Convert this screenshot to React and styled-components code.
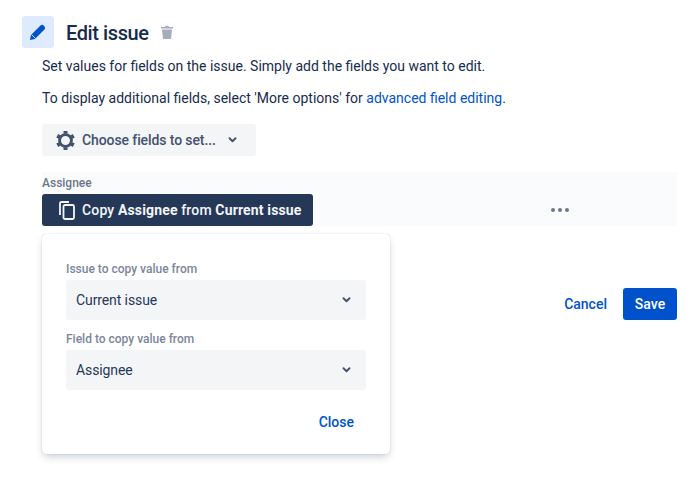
import React from "react";
import styled, { createGlobalStyle } from "styled-components";

const FONT = `Roboto, "Noto Sans", sans-serif`;

const GlobalStyle = createGlobalStyle`
  html, body {
    margin: 0;
    background: #fff;
  }
  body {
    font-family: ${FONT};
    font-size: 14px;
    color: #172b4d;
  }
`;

const Page = styled.div`
  width: 690px;
  height: 489px;
  padding: 16px 13px 0 22px;
  box-sizing: border-box;
  overflow: hidden;
`;

const Header = styled.div`
  display: flex;
  align-items: center;
  height: 32px;
`;

const IconTile = styled.div`
  width: 32px;
  height: 32px;
  border-radius: 3px;
  background: #deebff;
  display: flex;
  align-items: center;
  justify-content: center;
  margin-right: 12px;
`;

const Title = styled.h1`
  margin: 2px 12px 0 0;
  font-size: 20px;
  line-height: 32px;
  font-weight: 500;
  letter-spacing: -0.4px;
  color: #172b4d;
`;

const Body = styled.div`
  padding-left: 20px;
`;

const Paragraph = styled.p`
  margin: ${(p) => p.$top}px 0 0;
  line-height: 20px;
  font-size: 14px;
`;

const Link = styled.a`
  color: #0052cc;
`;

const FieldsButton = styled.button`
  display: flex;
  align-items: center;
  width: 214px;
  height: 32px;
  margin-top: 16px;
  padding: 0 15px 0 14px;
  box-sizing: border-box;
  border: 0;
  border-radius: 3px;
  background: #f4f5f7;
  color: #42526e;
  font: 500 14px ${FONT};
`;

const FieldsLabel = styled.span`
  margin: 0 12px 0 7px;
  letter-spacing: -0.1px;
  white-space: nowrap;
`;

const FieldRow = styled.div`
  position: relative;
  height: 54px;
  margin-top: 16px;
  background: #fafbfc;
`;

const FieldLabel = styled.div`
  font-size: 12px;
  line-height: 22px;
  font-weight: 500;
  color: #6b778c;
`;

const CopyButton = styled.button`
  display: flex;
  align-items: center;
  width: 271px;
  height: 32px;
  padding: 0 0 0 17px;
  box-sizing: border-box;
  border: 0;
  border-radius: 3px;
  background: #253858;
  color: #f4f5f7;
  font: 500 14px ${FONT};
  white-space: nowrap;
  b {
    font-weight: 700;
  }
`;

const CopyText = styled.span`
  margin-left: 7px;
  letter-spacing: 0.15px;
`;

const Dots = styled.div`
  position: absolute;
  left: 509px;
  top: 36px;
  display: flex;
  gap: 3px;
  span {
    width: 4px;
    height: 4px;
    border-radius: 50%;
    background: #6b778c;
  }
`;

const Popover = styled.div`
  position: absolute;
  left: 0;
  top: 62px;
  z-index: 2;
  width: 348px;
  height: 220px;
  padding: 24px;
  box-sizing: border-box;
  background: #fff;
  border-radius: 4px;
  box-shadow: 0 4px 8px -2px rgba(9, 30, 66, 0.25), 0 0 1px rgba(9, 30, 66, 0.31);
`;

const PopLabel = styled.div`
  font-size: 12px;
  line-height: 22px;
  font-weight: 500;
  color: #7a869a;
`;

const Select = styled.div`
  display: flex;
  align-items: center;
  justify-content: space-between;
  height: 40px;
  padding: 0 15px 0 10px;
  margin-bottom: 8px;
  background: #f4f5f7;
  border-radius: 3px;
  letter-spacing: -0.1px;
  color: #253858;
`;

const PopFooter = styled.div`
  display: flex;
  justify-content: flex-end;
  margin-top: 20px;
  padding-right: 12px;
`;

const TextButton = styled.a`
  color: #0052cc;
  font-weight: 500;
  line-height: 24px;
`;

const Footer = styled.div`
  display: flex;
  justify-content: flex-end;
  align-items: center;
  gap: 16px;
  margin-top: 62px;
`;

const SaveButton = styled.button`
  width: 54px;
  height: 32px;
  border: 0;
  border-radius: 3px;
  background: #0052cc;
  color: #fff;
  font: 500 14px ${FONT};
`;

const Pencil = () => (
  <svg width="18" height="18" viewBox="0 0 20 20" fill="#0052cc">
    <path d="M1 19l1.200-5.600L12.800 2.800a2.400 2.400 0 0 1 3.400 0l1 1a2.400 2.400 0 0 1 0 3.400L6.600 17.800z" />
    <path d="M2.800 12.800l4.400 4.400" stroke="#deebff" strokeWidth="1" />
  </svg>
);

const Trash = () => (
  <svg width="12" height="14" viewBox="0 0 12 14" fill="#a5adba">
    <path d="M0 2h4l.6-1.200h2.800L8 2h4v1.600H0zM1 4.400h10L10 14H2z" />
  </svg>
);

const Gear = () => (
  <svg width="19" height="19" viewBox="0 0 24 24" fill="none" stroke="#42526e" strokeWidth="3.600">
    <circle cx="12" cy="12" r="7.500" />
    <path strokeWidth="5" d="M12 0v3.500M12 20.500v3.500M1.600 6l3 1.750M19.400 16.250l3 1.750M1.600 18l3-1.750M19.400 7.750l3-1.750" />
  </svg>
);

const Chevron = () => (
  <svg width="9" height="6" viewBox="0 0 10 7" fill="none" stroke="#42526e" strokeWidth="2.200" strokeLinecap="round" strokeLinejoin="round">
    <path d="M1.500 1.500L5 5l3.500-3.500" />
  </svg>
);

const CopyIcon = () => (
  <svg width="16" height="19" viewBox="0 0 16 19" fill="none" stroke="#f4f5f7" strokeWidth="1.800">
    <path d="M1 14V2.500C1 1.600 1.600 1 2.500 1H10" />
    <rect x="4.500" y="4" width="10.500" height="14" rx="1.500" />
  </svg>
);

const App = () => {
  return (
    <Page>
      <GlobalStyle />
      <Header>
        <IconTile>
          <Pencil />
        </IconTile>
        <Title>Edit issue</Title>
        <Trash />
      </Header>
      <Body>
        <Paragraph $top={8}>
          Set values for fields on the issue. Simply add the fields you want to edit.
        </Paragraph>
        <Paragraph $top={12}>
          To display additional fields, select 'More options' for <Link>advanced field editing</Link>.
        </Paragraph>
        <FieldsButton>
          <Gear />
          <FieldsLabel>Choose fields to set...</FieldsLabel>
          <Chevron />
        </FieldsButton>
        <FieldRow>
          <FieldLabel>Assignee</FieldLabel>
          <CopyButton>
            <CopyIcon />
            <CopyText>
              Copy <b>Assignee</b> from <b>Current issue</b>
            </CopyText>
          </CopyButton>
          <Dots>
            <span />
            <span />
            <span />
          </Dots>
          <Popover>
            <PopLabel>Issue to copy value from</PopLabel>
            <Select>
              Current issue
              <Chevron />
            </Select>
            <PopLabel>Field to copy value from</PopLabel>
            <Select>
              Assignee
              <Chevron />
            </Select>
            <PopFooter>
              <TextButton>Close</TextButton>
            </PopFooter>
          </Popover>
        </FieldRow>
        <Footer>
          <TextButton>Cancel</TextButton>
          <SaveButton>Save</SaveButton>
        </Footer>
      </Body>
    </Page>
  );
};

export default App;
